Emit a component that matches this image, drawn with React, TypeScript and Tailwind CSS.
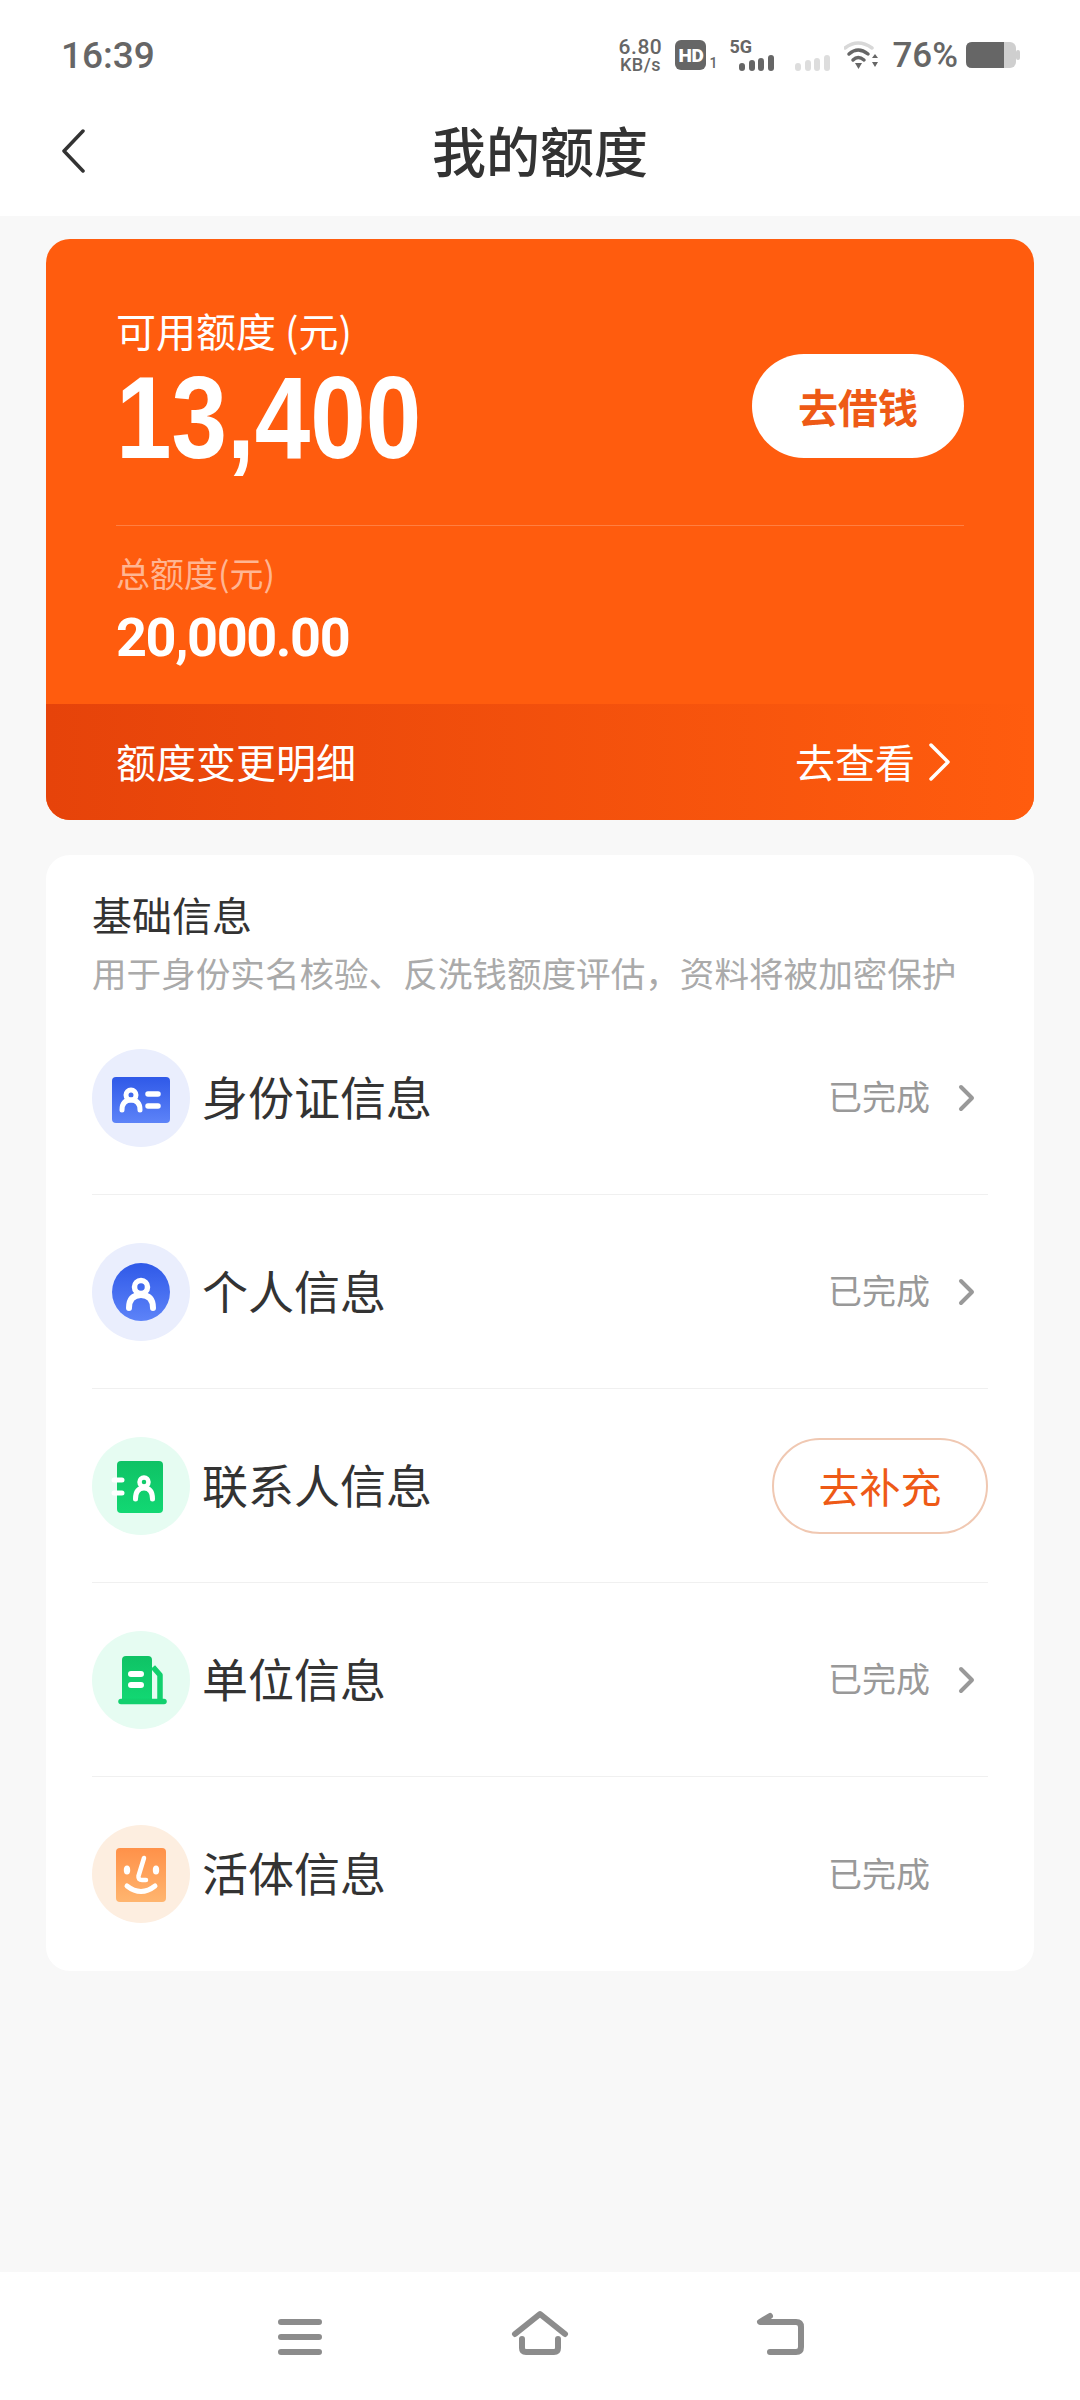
import { ReactNode } from 'react';

const CJK = "font-['Noto_Sans_CJK_SC','Noto_Sans',sans-serif]";

function StatusBar() {
  return (
    <div className="flex h-[108px] items-center justify-between pl-[61px] pr-[60px] pt-[2px] text-[#666666]">
      <span className="font-['Roboto',sans-serif] text-[37px] leading-none font-medium">16:39</span>
      <div className="flex items-center">
        <div className="flex w-[50px] flex-col items-center font-['Roboto',sans-serif] font-medium">
          <span className="text-[21px] leading-[18px] tracking-[0.5px]">6.80</span>
          <span className="text-[18px] leading-[17px] tracking-[0.5px]">KB/s</span>
        </div>
        <div className="ml-[10px] flex h-[30px] w-[31px] items-center justify-center rounded-[6px] bg-[#666666] font-['Roboto',sans-serif] text-[19px] leading-none font-black tracking-[-0.5px] text-white">
          HD
        </div>
        <span className="mt-[16px] ml-[3px] w-[11px] font-['Roboto',sans-serif] text-[14px] leading-none font-medium">1</span>
        <div className="relative ml-[9px] h-[32px] w-[45px]">
          <span className="absolute top-[-1px] left-0 font-['Roboto',sans-serif] text-[18px] leading-none font-bold">5G</span>
          <Bars color="#666666" className="absolute right-0 bottom-0" />
        </div>
        <Bars color="#dddddd" className="mt-[16px] ml-[21px]" />
        <svg viewBox="0 0 36 30" className="ml-[14px] h-[30px] w-[36px]">
          <path d="M1 8 Q14 -2 28 8" fill="none" stroke="#d8d8d8" strokeWidth="3.5" strokeLinecap="round" />
          <path d="M5 14 Q14 6 24 14" fill="none" stroke="#666666" strokeWidth="3.5" strokeLinecap="round" />
          <path d="M9 20 Q14 15 20 20" fill="none" stroke="#666666" strokeWidth="3.5" strokeLinecap="round" />
          <path d="M11 23 H18 L14.5 29 Z" fill="#666666" />
          <path d="M28 18 L31 14 L34 18 Z M28 22 H34 L31 27 Z" fill="#666666" />
        </svg>
        <span className="ml-[12px] font-['Roboto',sans-serif] text-[35px] leading-none font-medium">76%</span>
        <svg viewBox="0 0 54 26" className="ml-[8px] h-[26px] w-[54px]">
          <rect x="0" y="0" width="50" height="26" rx="6" fill="#cfcfcf" />
          <path d="M6 0 H38 V26 H6 Q0 26 0 20 V6 Q0 0 6 0 Z" fill="#666666" />
          <rect x="50" y="8" width="4" height="10" rx="2" fill="#cfcfcf" />
        </svg>
      </div>
    </div>
  );
}

function Bars({ color, className }: { color: string; className?: string }) {
  return (
    <svg viewBox="0 0 35 16" className={`h-[16px] w-[35px] ${className ?? ''}`}>
      <rect x="0" y="8" width="6" height="8" rx="3" fill={color} />
      <rect x="10" y="5" width="6" height="11" rx="3" fill={color} />
      <rect x="19" y="3" width="6" height="13" rx="3" fill={color} />
      <rect x="29" y="0" width="6" height="16" rx="3" fill={color} />
    </svg>
  );
}

function Header() {
  return (
    <div className="relative flex h-[108px] items-center justify-center bg-white pb-[24px]">
      <svg viewBox="0 0 24 44" className="absolute top-[21px] left-[61px] h-[44px] w-[24px]" fill="none">
        <path d="M22 2 L3 22 L22 42" stroke="#333333" strokeWidth="3.5" strokeLinecap="round" strokeLinejoin="round" />
      </svg>
      <h1 className="text-[54px] leading-none font-medium text-[#333333]">我的额度</h1>
    </div>
  );
}

function QuotaCard() {
  return (
    <div className="mx-[46px] mt-[23px] overflow-hidden rounded-[24px] bg-[#ff5c0e] text-white">
      <div className="flex h-[465px] flex-col px-[70px]">
        <div className="flex h-[286px] items-start justify-between">
          <div className="pt-[66px]">
            <p className="text-[40px] leading-[50px]">可用额度 (元)</p>
            <p className="mt-[5px] origin-left scale-x-[0.86] font-['Liberation_Sans',sans-serif] text-[116px] leading-[116px] font-bold">13,400</p>
          </div>
          <button className="mt-[115px] h-[104px] w-[212px] rounded-full bg-white text-[40px] font-bold text-[#ee5a16]">
            去借钱
          </button>
        </div>
        <div className="h-[1px] bg-[#ff7f42]" />
        <p className="mt-[26px] text-[34px] leading-[42px] text-[#ffb592]">总额度(元)</p>
        <p className="mt-[14px] font-['Roboto',sans-serif] text-[54px] leading-[60px] font-bold tracking-[-1.4px]">20,000.00</p>
      </div>
      <div className="flex h-[116px] items-center justify-between bg-gradient-to-r from-[#e6430a] to-[#ff5c0e] pr-[82px] pl-[70px]">
        <span className="-mt-[3px] text-[40px] leading-none">额度变更明细</span>
        <div className="flex items-center">
          <span className="-mt-[3px] text-[40px] leading-none">去查看</span>
          <svg viewBox="0 0 24 38" className="ml-[13px] h-[38px] w-[24px]" fill="none">
            <path d="M3 2 L20 19 L3 36" stroke="#ffffff" strokeWidth="3.5" strokeLinecap="round" strokeLinejoin="round" />
          </svg>
        </div>
      </div>
    </div>
  );
}

function IconCircle({ bg, children }: { bg: string; children: ReactNode }) {
  return (
    <svg viewBox="0 0 98 98" className="h-[98px] w-[98px] shrink-0">
      <circle cx="49" cy="49" r="49" fill={bg} />
      {children}
    </svg>
  );
}

function Grad({ id, from, to }: { id: string; from: string; to: string }) {
  return (
    <defs>
      <linearGradient id={id} x1="0" y1="0" x2="0" y2="1">
        <stop offset="0" stopColor={from} />
        <stop offset="1" stopColor={to} />
      </linearGradient>
    </defs>
  );
}

const personStroke = { fill: 'none', stroke: '#ffffff', strokeLinecap: 'round' as const };

function IdIcon() {
  return (
    <IconCircle bg="#eaeefd">
      <Grad id="g1" from="#2f59e8" to="#5d83f8" />
      <rect x="20" y="28" width="58" height="46" rx="4" fill="url(#g1)" />
      <circle cx="39" cy="46" r="5" {...personStroke} strokeWidth="5" />
      <path d="M30 61 Q30 51 39 51 Q48 51 48 61" {...personStroke} strokeWidth="5" />
      <path d="M56 45 H66 M56 57 H66" {...personStroke} strokeWidth="5.5" />
    </IconCircle>
  );
}

function PersonIcon() {
  return (
    <IconCircle bg="#eaeefd">
      <Grad id="g2" from="#2f59e8" to="#5d83f8" />
      <circle cx="49" cy="49" r="29" fill="url(#g2)" />
      <circle cx="49" cy="44" r="6.5" {...personStroke} strokeWidth="5.5" />
      <path d="M37 65 Q37 52 49 52 Q61 52 61 65" {...personStroke} strokeWidth="6" />
    </IconCircle>
  );
}

function ContactIcon() {
  return (
    <IconCircle bg="#e6fcf2">
      <Grad id="g3" from="#0fc265" to="#12d873" />
      <rect x="25" y="24" width="46" height="52" rx="4" fill="url(#g3)" />
      <path d="M22 43 H30 M22 56 H30" {...personStroke} strokeWidth="5" />
      <circle cx="52" cy="45" r="4.5" {...personStroke} strokeWidth="4.5" />
      <path d="M43.5 62 Q43.5 51 52 51 Q60.5 51 60.5 62" {...personStroke} strokeWidth="5" />
    </IconCircle>
  );
}

function CompanyIcon() {
  return (
    <IconCircle bg="#e6fcf2">
      <Grad id="g4" from="#0fc265" to="#12d873" />
      <path d="M34 25 H56 Q60 25 60 29 V70 H30 V29 Q30 25 34 25 Z" fill="url(#g4)" />
      <path d="M61 36 L68 44 V69" fill="none" stroke="#12d06e" strokeWidth="5.5" strokeLinejoin="round" />
      <path d="M29 70.5 H72" stroke="#12d06e" strokeWidth="5.5" strokeLinecap="round" />
      <path d="M39 43 H49 M39 54 H49" {...personStroke} strokeWidth="6" />
    </IconCircle>
  );
}

function FaceIcon() {
  return (
    <IconCircle bg="#fdeee0">
      <Grad id="g5" from="#ff9149" to="#ffb56f" />
      <rect x="24" y="23" width="50" height="54" rx="4" fill="url(#g5)" />
      <ellipse cx="35" cy="45" rx="3.2" ry="4.5" fill="#ffffff" />
      <ellipse cx="64" cy="45" rx="3.2" ry="4.5" fill="#ffffff" />
      <path d="M52 33 L46.5 51 Q46 55 50 55 L54 55" {...personStroke} strokeWidth="4.5" strokeLinejoin="round" />
      <path d="M35 61 Q49 72 63 61" {...personStroke} strokeWidth="5" />
    </IconCircle>
  );
}

type Row = { label: string; icon: ReactNode; action?: boolean; chevron?: boolean };

const rows: Row[] = [
  { label: '身份证信息', icon: <IdIcon />, chevron: true },
  { label: '个人信息', icon: <PersonIcon />, chevron: true },
  { label: '联系人信息', icon: <ContactIcon />, action: true },
  { label: '单位信息', icon: <CompanyIcon />, chevron: true },
  { label: '活体信息', icon: <FaceIcon /> },
];

function InfoRow({ row, last }: { row: Row; last: boolean }) {
  return (
    <div className={`flex h-[194px] items-center ${last ? '' : 'border-b border-[#f0f0f0]'}`}>
      {row.icon}
      <span className="-mt-[6px] ml-[12px] flex-1 text-[46px] leading-none text-[#333333]">{row.label}</span>
      {row.action ? (
        <button className="h-[96px] w-[216px] rounded-full border-2 border-[#f0c8b2] text-[41px] leading-none text-[#ee5a16]">
          去补充
        </button>
      ) : (
        <div className="flex items-center">
          <span className="-mt-[3px] text-[34px] leading-none text-[#999999]">已完成</span>
          <div className="ml-[28px] w-[30px]">
            {row.chevron && (
              <svg viewBox="0 0 18 28" className="h-[28px] w-[18px]" fill="none">
                <path d="M3 3 L14 14 L3 25" stroke="#999999" strokeWidth="4" strokeLinecap="round" strokeLinejoin="round" />
              </svg>
            )}
          </div>
        </div>
      )}
    </div>
  );
}

function BasicInfo() {
  return (
    <div className="mx-[46px] mt-[35px] rounded-[24px] bg-white px-[46px]">
      <div className="flex h-[146px] flex-col">
        <p className="mt-[37px] text-[40px] leading-[44px] text-[#333333]">基础信息</p>
        <p className="mt-[15px] text-[34.6px] leading-[42px] text-[#aaaaaa]">用于身份实名核验、反洗钱额度评估，资料将被加密保护</p>
      </div>
      {rows.map((row, i) => (
        <InfoRow key={row.label} row={row} last={i === rows.length - 1} />
      ))}
    </div>
  );
}

function NavBar() {
  const line = { fill: 'none', stroke: '#8c8c8c', strokeWidth: 6, strokeLinecap: 'round' as const, strokeLinejoin: 'round' as const };
  return (
    <div className="flex h-[128px] items-center justify-center bg-white pt-[8px]">
      <div className="flex w-[240px] justify-center">
        <svg viewBox="0 0 80 80" className="h-[80px] w-[80px]">
          <path d="M21 22 H59 M21 37 H59 M21 52 H59" {...line} />
        </svg>
      </div>
      <div className="flex w-[240px] justify-center">
        <svg viewBox="0 0 80 80" className="h-[80px] w-[80px]">
          <path d="M15 34 L40 14 L65 34" {...line} />
          <path d="M22 39 V48 Q22 52 26 52 H54 Q58 52 58 48 V39" {...line} />
        </svg>
      </div>
      <div className="flex w-[240px] justify-center">
        <svg viewBox="0 0 80 80" className="h-[80px] w-[80px]">
          <path d="M30 16 L20 22 H56 Q61 22 61 27 V47 Q61 52 56 52 H30" {...line} />
        </svg>
      </div>
    </div>
  );
}

export default function App() {
  return (
    <div className={`flex min-h-[2400px] flex-col bg-[#f8f8f8] ${CJK}`}>
      <div className="bg-white">
        <StatusBar />
        <Header />
      </div>
      <main className="flex-1">
        <QuotaCard />
        <BasicInfo />
      </main>
      <NavBar />
    </div>
  );
}
